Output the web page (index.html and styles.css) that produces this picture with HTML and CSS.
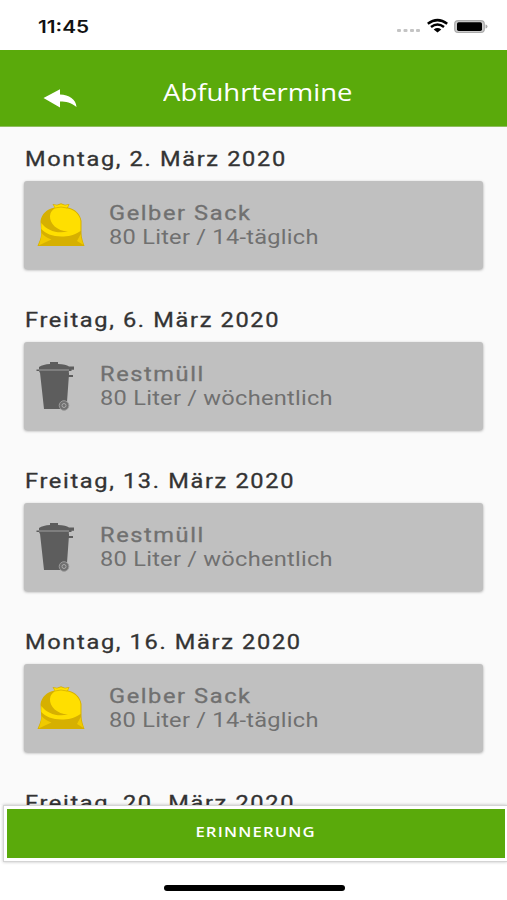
FILE: index.html
```html
<!DOCTYPE html>
<html lang="de">
<head>
<meta charset="utf-8">
<title>Abfuhrtermine</title>
<link rel="stylesheet" href="styles.css">
</head>
<body>
<svg class="defs" width="0" height="0" aria-hidden="true">
  <symbol id="sack" viewBox="0 0 48 44">
    <path fill="#d6b000" d="M15.500 1l4.500.8L24 .3l4 1.500 4.500-.8L31 4.500C38 6 43.500 11 44.500 18v12c0 4.500 1.500 8.500 3 13H.5C2 38.500 4 36 4.200 31L3.500 18C4.500 11 10 6 17.500 4.500z"/>
    <path fill="#ffdf00" d="M17 1.800l3 .7 4-1.200 4 1.200 3.500-.7-1 2.200-1 1.300C37 6.500 42.800 11.500 43.500 18v10C37 32.500 31 33.500 24.500 33.500 15.500 33.500 8 30.500 4.300 26V20C10 27.500 20 31 31 28.500 20 28 12.500 20.500 13 13c.3-3.500 2-6 5-7.800z"/>
    <path fill="#f0ca00" d="M4.500 30c2.500 3 5.500 5 10 6.500L9 39l-7.300 3.500C3 38.500 4.500 35 4.500 30zM43.700 31c.3 4 1.500 7.500 2.800 11L40 38z"/>
    <path fill="none" stroke="#d6b000" stroke-width=".8" d="M18 5q6-2 12 0"/>
  </symbol>
  <symbol id="bin" viewBox="0 0 39 49">
    <path fill="#5d5d5d" d="M3 5q4-2.700 11-3V0h8v2q8 0 11 2.500h5v3.300h-2.500V9H33l-.5 2H4L3 9H.5V7.500H3zM4 10.500h29v2.500h4v2h-4.200L31 40l-3 7H8z"/>
    <path stroke="#a0a0a0" stroke-width="1" fill="none" d="M3 8h30"/>
    <circle cx="28" cy="43.500" r="4.800" fill="#707070" stroke="#9a9a9a"/>
    <circle cx="28" cy="43.500" r="2" fill="none" stroke="#aaa"/>
  </symbol>
</svg>
<div class="screen">
  <header class="status">
    <span class="clock">11:45</span>
    <svg class="indicators" viewBox="0 0 92 20">
      <g fill="#c4c4c4"><rect x="1" y="13" width="4" height="3" rx="1"/><rect x="7.500" y="13" width="4" height="3" rx="1"/><rect x="14" y="13" width="4" height="3" rx="1"/><rect x="20" y="13" width="4" height="3" rx="1"/></g>
      <g fill="none" stroke="#000" stroke-width="2.500"><path d="M31.800 7.700q9.700-7.200 19.400 0M35 11q6.500-5 13 0"/></g>
      <path d="M37.700 13.500q3.800-2.800 7.600 0L41.500 16.500z"/>
      <rect x="58.700" y="4.700" width="29.600" height="11.800" rx="3.500" fill="#ccc" stroke="#aaa" stroke-width="1.200"/>
      <rect x="61" y="6.300" width="25" height="8.600" rx="1.700"/>
      <path fill="#aaa" d="M89.500 8.500q2 0 2 2t-2 2z"/>
    </svg>
  </header>
  <nav class="bar">
    <svg class="back" viewBox="0 0 34 20"><path fill="#fff" d="M.5 9L17 .3v5.200C26 6 33 10 33.500 18 28 13.500 23 12.500 17 12.500v6z"/></svg>
    <h1 class="title">Abfuhrtermine</h1>
  </nav>
  <main class="list">
    <section class="entry">
      <h2 class="date">Montag, 2. März 2020</h2>
      <div class="card sack"><svg class="icon"><use href="#sack"/></svg><div><p class="kind">Gelber Sack</p><p class="detail">80 Liter / 14-täglich</p></div></div>
    </section>
    <section class="entry">
      <h2 class="date">Freitag, 6. März 2020</h2>
      <div class="card bin"><svg class="icon"><use href="#bin"/></svg><div><p class="kind">Restmüll</p><p class="detail">80 Liter / wöchentlich</p></div></div>
    </section>
    <section class="entry">
      <h2 class="date">Freitag, 13. März 2020</h2>
      <div class="card bin"><svg class="icon"><use href="#bin"/></svg><div><p class="kind">Restmüll</p><p class="detail">80 Liter / wöchentlich</p></div></div>
    </section>
    <section class="entry">
      <h2 class="date">Montag, 16. März 2020</h2>
      <div class="card sack"><svg class="icon"><use href="#sack"/></svg><div><p class="kind">Gelber Sack</p><p class="detail">80 Liter / 14-täglich</p></div></div>
    </section>
    <section class="entry">
      <h2 class="date">Freitag, 20. März 2020</h2>
    </section>
  </main>
  <div class="action"><button class="remind"><span>ERINNERUNG</span></button></div>
  <footer class="home"><div class="pill"></div></footer>
</div>
</body>
</html>
```
FILE: styles.css
```css
* { box-sizing: border-box; margin: 0; padding: 0; }
body { background: #fff; font-family: Roboto, sans-serif; }
.defs { display: block; }
.screen { display: flex; flex-direction: column; width: 507px; height: 900px; overflow: hidden; }
.status { height: 50px; flex: none; display: flex; justify-content: space-between; padding: 16px 19px 0 38px; }
.clock { font: 600 17px/22px Inter, sans-serif; color: #111; transform: scaleX(1.22); transform-origin: left; }
.indicators { width: 92px; height: 20px; }
.bar { height: 77px; flex: none; display: flex; background: #5aaa0b; border-bottom: 1px solid #8fbd60; padding-left: 43px; }
.back { width: 34px; height: 20px; margin-top: 39px; }
.title { margin: 26px 0 0 86px; font: 400 24px/32px "Open Sans", sans-serif; color: #fff; transform: scaleX(1.145); transform-origin: left; white-space: nowrap; }
.list { height: 678px; flex: none; overflow: hidden; background: #fafafa; padding: 18px 24px 0; }
.entry { height: 161px; }
.date { font-size: 20px; line-height: 28px; font-weight: 400; letter-spacing: 1.400px; color: #333; -webkit-text-stroke: .3px #333; transform: translateX(1px) scaleX(1.18); transform-origin: left; white-space: nowrap; }
.card { display: flex; height: 88px; margin-top: 8px; background: #c0c0c0; border-radius: 3px; box-shadow: 0 1px 3px rgba(0,0,0,.35); color: #707070; white-space: nowrap; padding-top: 20px; }
.kind, .detail { font-size: 20px; line-height: 24px; transform: scaleX(1.18); transform-origin: left; }
.kind { font-weight: 400; letter-spacing: 1.350px; -webkit-text-stroke: .3px #707070; }
.detail { letter-spacing: .22px; }
.sack .icon { width: 48px; height: 44px; margin: 2px 24px 0 13px; }
.bin .icon { width: 39px; height: 49px; margin: 0 25px 0 12px; }
.action { height: 57px; flex: none; margin-left: 3px; background: #fff; border: 1px solid #d4d4d4; border-right: 0; padding: 3px 2px 3px 3px; box-shadow: 0 0 3px rgba(0,0,0,.25); z-index: 1; }
.remind { display: block; width: 100%; height: 49px; border: 0; background: #5aaa0b; color: #fff; font: 600 14px/20px "Open Sans", sans-serif; letter-spacing: 1px; padding-bottom: 3px; }
.remind span { display: inline-block; transform: scaleX(1.19); }
.home { flex: 1; padding-top: 23px; }
.pill { width: 181px; height: 6px; margin-left: 164px; border-radius: 3px; background: #000; }
```
